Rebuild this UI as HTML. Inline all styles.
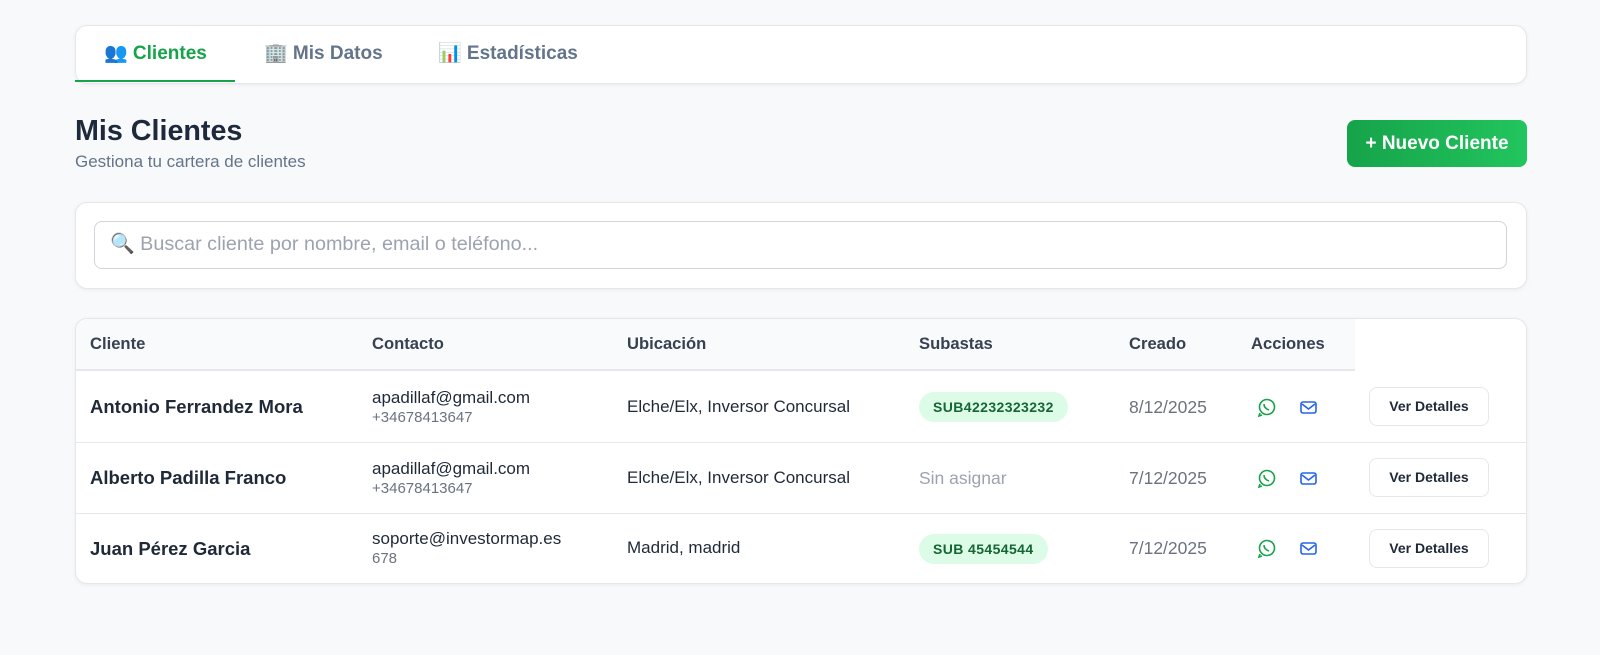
<!DOCTYPE html>
<html><head><meta charset="utf-8"><style>
*{box-sizing:border-box;margin:0;padding:0}
body{width:1600px;height:655px;background:#f8f9fb;font-family:"Liberation Sans",sans-serif;position:relative;overflow:hidden;color:#1f2937}
.abs{position:absolute}
.card{position:absolute;background:#fff;border:1px solid #e5e7eb;border-radius:12px;box-shadow:0 1px 4px rgba(0,0,0,.06)}
.tab{position:absolute;top:41px;font-size:19px;font-weight:bold;color:#64748b}
.th{position:absolute;top:334px;font-size:16.6px;font-weight:bold;color:#374151}
.name{position:absolute;font-size:18.5px;font-weight:bold;color:#1f2937}
.em{position:absolute;font-size:17px;color:#1f2937}
.ph{position:absolute;font-size:15px;color:#6b7280}
.loc{position:absolute;font-size:17px;color:#1f2937}
.date{position:absolute;font-size:17.5px;color:#6b7280}
.badge{position:absolute;height:30px;border-radius:15px;background:#dcfce7;color:#166534;font-size:14px;letter-spacing:.4px;font-weight:bold;line-height:30px;padding:0 14px}
.btn{position:absolute;left:1369px;width:120px;height:39px;border:1px solid #e5e7eb;border-radius:8px;background:#fff;font-size:14px;font-weight:bold;text-align:center;line-height:37px;color:#1f2937}
.line{position:absolute;left:76px;width:1450px;height:1px;background:#e5e7eb}
</style></head><body>
<div class="card" style="left:75px;top:25px;width:1452px;height:59px"></div>
<div class="abs" style="left:75px;top:80px;width:160px;height:2px;background:#16a34a"></div>
<div class="tab" style="left:104px;color:#16a34a">👥 Clientes</div>
<div class="tab" style="left:264px">🏢 Mis Datos</div>
<div class="tab" style="left:438px">📊 Estadísticas</div>

<div class="abs" style="left:75px;top:115px;font-size:28.7px;font-weight:bold;color:#1e293b">Mis Clientes</div>
<div class="abs" style="left:75px;top:152px;font-size:17px;color:#64748b">Gestiona tu cartera de clientes</div>
<div class="abs" style="left:1347px;top:120px;width:180px;height:47px;border-radius:8px;background:linear-gradient(90deg,#16a34a,#22c55e);color:#fff;font-size:19px;font-weight:bold;text-align:center;line-height:47px">+ Nuevo Cliente</div>

<div class="card" style="left:75px;top:202px;width:1452px;height:87px"></div>
<div class="abs" style="left:94px;top:221px;width:1413px;height:48px;border:1px solid #d1d5db;border-radius:8px;background:#fff"></div>
<div class="abs" style="left:110px;top:232px;font-size:19.8px;color:#9ca3af">🔍 Buscar cliente por nombre, email o teléfono...</div>

<div class="card" style="left:75px;top:318px;width:1452px;height:266px;overflow:hidden">
<div class="abs" style="left:0;top:0;width:1279px;height:52px;background:#f9fafb;border-bottom:2px solid #e5e7eb"></div>
</div>
<div class="th" style="left:90px">Cliente</div>
<div class="th" style="left:372px">Contacto</div>
<div class="th" style="left:627px">Ubicación</div>
<div class="th" style="left:919px">Subastas</div>
<div class="th" style="left:1129px">Creado</div>
<div class="th" style="left:1251px">Acciones</div>
<div class="line" style="top:442px"></div>
<div class="line" style="top:513px"></div>

<div class="name" style="left:90px;top:396px">Antonio Ferrandez Mora</div>
<div class="em" style="left:372px;top:388px">apadillaf@gmail.com</div>
<div class="ph" style="left:372px;top:409px">+34678413647</div>
<div class="loc" style="left:627px;top:397px">Elche/Elx, Inversor Concursal</div>
<div class="badge" style="left:919px;top:392px">SUB42232323232</div>
<div class="date" style="left:1129px;top:397px">8/12/2025</div>
<div class="btn" style="top:387px">Ver Detalles</div>

<div class="name" style="left:90px;top:467px">Alberto Padilla Franco</div>
<div class="em" style="left:372px;top:459px">apadillaf@gmail.com</div>
<div class="ph" style="left:372px;top:480px">+34678413647</div>
<div class="loc" style="left:627px;top:468px">Elche/Elx, Inversor Concursal</div>
<div class="date" style="left:919px;top:468px;color:#9ca3af">Sin asignar</div>
<div class="date" style="left:1129px;top:468px">7/12/2025</div>
<div class="btn" style="top:458px">Ver Detalles</div>

<div class="name" style="left:90px;top:538px">Juan Pérez Garcia</div>
<div class="em" style="left:372px;top:529px">soporte@investormap.es</div>
<div class="ph" style="left:372px;top:550px">678</div>
<div class="loc" style="left:627px;top:538px">Madrid, madrid</div>
<div class="badge" style="left:919px;top:534px">SUB 45454544</div>
<div class="date" style="left:1129px;top:538px">7/12/2025</div>
<div class="btn" style="top:529px">Ver Detalles</div>

<svg class="abs" style="left:0;top:0" width="1600" height="655">
<g fill="none" stroke-width="1.6">
<g stroke="#16a34a"><circle cx="1267" cy="407" r="7.5"/><circle cx="1267" cy="478" r="7.5"/><circle cx="1267" cy="548" r="7.5"/>
<path d="M1264 404c0 3 2 5 5 6M1262 415l-3 1 1-3M1262 486l-3 1 1-3M1262 556l-3 1 1-3M1264 475c0 3 2 5 5 6M1264 545c0 3 2 5 5 6"/></g>
<g stroke="#2563eb"><rect x="1301" y="402" width="15" height="11" rx="2"/><path d="M1302 404l6.5 5 6.5-5"/>
<rect x="1301" y="473" width="15" height="11" rx="2"/><path d="M1302 475l6.5 5 6.5-5"/>
<rect x="1301" y="543" width="15" height="11" rx="2"/><path d="M1302 545l6.5 5 6.5-5"/></g>
</g></svg>
</body></html>
